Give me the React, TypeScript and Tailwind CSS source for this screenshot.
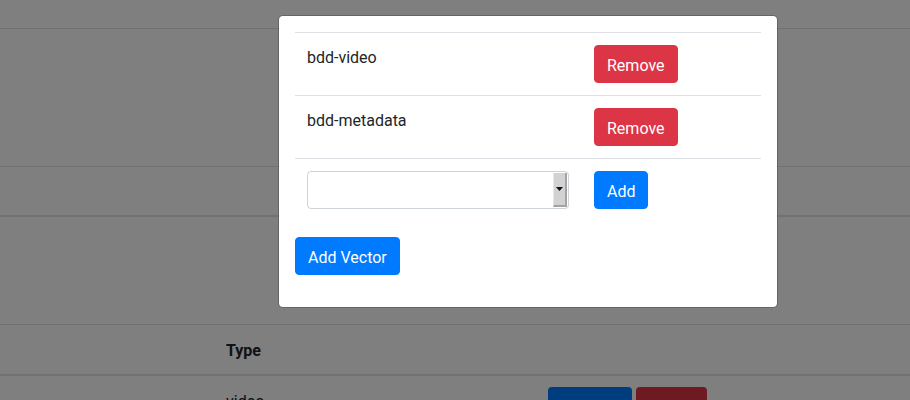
import React from "react";

export default function App() {
  const font = { fontFamily: "Roboto, 'Liberation Sans', sans-serif" };
  return (
    <div className="relative w-[910px] h-[400px] overflow-hidden bg-white text-[#212529] text-base leading-6" style={font}>
      {/* background page */}
      <div className="flex flex-col">
        <div className="h-[29px] border-b border-[#dee2e6]" />
        <div className="h-[138px] border-b border-[#dee2e6]" />
        <div className="h-[50px] border-b-2 border-[#dee2e6]" />
        <div className="h-[108px] border-b border-[#dee2e6]" />
        <div className="flex h-[51px] border-b-2 border-[#dee2e6]">
          <div className="w-[214px]" />
          <div className="w-[322px] px-3 pt-[14px] font-bold">Type</div>
        </div>
        <div className="flex">
          <div className="w-[214px]" />
          <div className="w-[322px] px-3 pt-[14px] pb-3">video</div>
          <div className="flex gap-1 px-3 pt-[11px]">
            <div className="w-[84px] h-[38px] rounded-[4px] bg-[#007bff]" />
            <div className="w-[71px] h-[38px] rounded-[4px] bg-[#dc3545]" />
          </div>
        </div>
      </div>

      {/* backdrop */}
      <div className="absolute inset-0 bg-black/50" />

      {/* modal */}
      <div className="absolute left-[278px] top-[15px] w-[500px] rounded-[5px] border border-black/20 bg-white bg-clip-padding">
        <div className="p-4">
          <div className="flex flex-col mb-4">
            <div className="flex border-t border-[#dee2e6]">
              <div className="w-[287px] px-3 pt-[13px] pb-[11px]">bdd-video</div>
              <div className="flex-1 p-3">
                <button className="px-3 pt-[8px] pb-[4px] rounded-[4px] border border-[#dc3545] bg-[#dc3545] text-white leading-6">Remove</button>
              </div>
            </div>
            <div className="flex border-t border-[#dee2e6]">
              <div className="w-[287px] px-3 pt-[13px] pb-[11px]">bdd-metadata</div>
              <div className="flex-1 p-3">
                <button className="px-3 pt-[8px] pb-[4px] rounded-[4px] border border-[#dc3545] bg-[#dc3545] text-white leading-6">Remove</button>
              </div>
            </div>
            <div className="flex border-t border-[#dee2e6]">
              <div className="w-[287px] p-3">
                <div className="flex h-[38px] w-[262px] rounded-[4px] border border-[#ced4da] bg-white overflow-hidden">
                  <div className="flex-1" />
                  <div className="w-[14px] my-px mr-px flex items-center justify-center bg-[#d2d2d2] border-r-2 border-b-2 border-[#a3a3a3] border-l border-l-[#e8e8e8]">
                    <svg width="7" height="4" viewBox="0 0 7 4"><path d="M0 0h7L3.5 4z" fill="#111" /></svg>
                  </div>
                </div>
              </div>
              <div className="flex-1 p-3">
                <button className="px-3 pt-[8px] pb-[4px] rounded-[4px] border border-[#007bff] bg-[#007bff] text-white leading-6">Add</button>
              </div>
            </div>
          </div>
          <div className="mb-4">
            <button className="px-3 pt-[8px] pb-[4px] rounded-[4px] border border-[#007bff] bg-[#007bff] text-white leading-6">Add Vector</button>
          </div>
        </div>
      </div>
    </div>
  );
}
